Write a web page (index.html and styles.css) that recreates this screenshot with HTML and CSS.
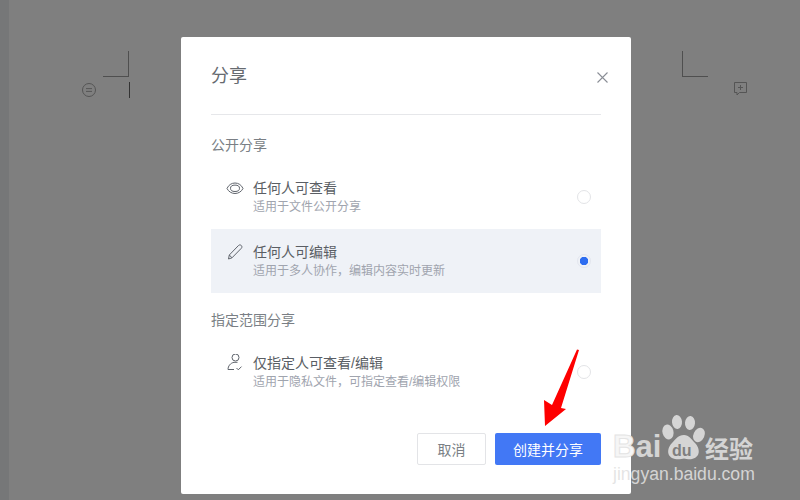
FILE: index.html
```html
<!DOCTYPE html>
<html lang="zh">
<head>
<meta charset="utf-8">
<title>分享</title>
<link rel="stylesheet" href="styles.css">
</head>
<body>
<div class="page">
  <div class="rail"></div>
  <div class="doc">
    <div class="crop crop-left"></div>
    <div class="crop crop-right"></div>
    <div class="caret"></div>
    <svg class="doc-icon minus-icon" viewBox="0 0 16 16"><circle cx="8" cy="8" r="6.500"/><path d="M5 6.600h6M5 9.400h6"/></svg>
    <svg class="doc-icon comment-icon" viewBox="0 0 15 15"><path d="M1.500 1.500h12v10H6.500L4 14v-2.500H1.500z"/><path d="M7.500 4v5M5 6.500h5"/></svg>
  </div>
  <main class="modal">
    <header class="modal-head">
      <h1 class="modal-title">分享</h1>
      <svg class="close" viewBox="0 0 11 11"><path d="M.5.500l10 10M10.500.500l-10 10"/></svg>
    </header>
    <h2 class="section-label">公开分享</h2>
    <section class="option">
      <svg class="option-icon" viewBox="0 0 18 18"><path d="M1 9.500C2.500 6 5.500 4 9 4s6.500 2 8 5.500C15.500 12.500 12.500 14.500 9 14.500S2.500 12.500 1 9.500z"/><ellipse cx="9" cy="9.300" rx="4.500" ry="3.200"/></svg>
      <div class="option-text">
        <div class="option-title">任何人可查看</div>
        <div class="option-desc">适用于文件公开分享</div>
      </div>
      <span class="radio"></span>
    </section>
    <section class="option option-active">
      <svg class="option-icon" viewBox="0 0 18 18"><path d="M2.500 16l.8-4L12.500 2.500c.8-.8 2-.8 2.800 0s.8 2 0 2.800L6 14.800z"/><path d="M3.300 12l2.700 2.800"/></svg>
      <div class="option-text">
        <div class="option-title">任何人可编辑</div>
        <div class="option-desc">适用于多人协作，编辑内容实时更新</div>
      </div>
      <span class="radio radio-on"></span>
    </section>
    <h2 class="section-label section-second">指定范围分享</h2>
    <section class="option">
      <svg class="option-icon" viewBox="0 0 18 18"><circle cx="9.500" cy="3.500" r="3.500"/><path d="M8 15.500H2C2 12 4.500 9 8 8.300h3.500"/><path d="M10.500 14l1.800 1.800 3.200-3.200"/></svg>
      <div class="option-text">
        <div class="option-title">仅指定人可查看/编辑</div>
        <div class="option-desc">适用于隐私文件，可指定查看/编辑权限</div>
      </div>
      <span class="radio"></span>
    </section>
    <footer class="modal-foot">
      <button class="btn btn-plain">取消</button>
      <button class="btn btn-primary">创建并分享</button>
    </footer>
  </main>
  <svg class="arrow" viewBox="0 0 42 85"><path d="M37 4.500L39 5L21 63L26 64L5 81L4 55L12 60z"/></svg>
  <div class="watermark">
    <svg class="paw" viewBox="0 0 48 50">
      <ellipse cx="8" cy="20" rx="5.500" ry="7.500" transform="rotate(-15 8 20)"/>
      <ellipse cx="17" cy="10" rx="5" ry="7" transform="rotate(-5 17 10)"/>
      <ellipse cx="30" cy="11" rx="5" ry="7" transform="rotate(5 30 11)"/>
      <ellipse cx="39" cy="23" rx="5.500" ry="7.500" transform="rotate(25 39 23)"/>
      <path d="M24 23c5 0 7 4 11 8 5 5 6 14-3 16-3 1-6-.5-8-.5s-5 1.500-9 .5c-9-2-8-11-3-16 4-4 6-8 12-8z"/>
    </svg>
    <span class="wm-bai"><span class="wm-b">B</span>ai</span>
    <span class="wm-du">du</span>
    <span class="wm-cn">经验</span>
    <span class="wm-url">jingyan.baidu.com</span>
  </div>
</div>
</body>
</html>
```

FILE: styles.css
```css
* { box-sizing: border-box; }
html, body { margin: 0; padding: 0; }
body {
  width: 800px;
  height: 500px;
  overflow: hidden;
  font-family: "Liberation Sans", "Noto Sans CJK SC", sans-serif;
}
.page {
  position: relative;
  width: 800px;
  height: 500px;
  background: #7f7f7f;
  padding: 37px 169px 6px 181px;
}
.rail {
  position: absolute;
  left: 0;
  top: 0;
  width: 9px;
  height: 500px;
  background: #767778;
}
.crop { position: absolute; width: 26px; height: 26px; border: 0 solid #4f4f4f; }
.crop-left { left: 103px; top: 51px; border-right-width: 1px; border-bottom-width: 1px; }
.crop-right { left: 682px; top: 51px; border-left-width: 1px; border-bottom-width: 1px; }
.caret { position: absolute; left: 129px; top: 82px; width: 1px; height: 16px; background: #333; }
.doc-icon { position: absolute; fill: none; stroke: #555; stroke-width: 1; }
.minus-icon { left: 81px; top: 82px; width: 16px; height: 16px; }
.comment-icon { left: 733px; top: 81px; width: 15px; height: 15px; }

.modal {
  position: relative;
  width: 450px;
  height: 457px;
  background: #fff;
  border-radius: 2px;
  padding: 0 30px;
  display: flex;
  flex-direction: column;
}
.modal-head {
  height: 78px;
  border-bottom: 1px solid #e6e7ea;
  display: flex;
  justify-content: space-between;
  align-items: flex-start;
  padding-top: 26px;
  flex: none;
}
.modal-title {
  margin: 0;
  font-size: 18px;
  line-height: 26px;
  font-weight: 400;
  color: #666a70;
}
.close {
  width: 11px;
  height: 11px;
  margin: 9px -7px 0 0;
  fill: none;
  stroke: #8a8e96;
  stroke-width: 1.100;
}
.section-label {
  margin: 20px 0 0;
  font-size: 14px;
  line-height: 20px;
  font-weight: 400;
  color: #7a7f85;
}
.section-second { margin-top: 17px; }
.option {
  height: 64px;
  flex: none;
  display: flex;
  align-items: flex-start;
  padding: 14px 10px 0 15px;
}
.section-label + .option { margin-top: 10px; }
.option-active { background: #eff2f7; }
.option-icon {
  width: 18px;
  height: 18px;
  flex: none;
  margin-right: 9px;
  fill: none;
  stroke: #5f646c;
  stroke-width: 1;
}
.option-text { flex: 1; }
.option-title {
  font-size: 14px;
  line-height: 19px;
  color: #5a5e64;
}
.option-desc {
  font-size: 12px;
  line-height: 18px;
  color: #a0a4ae;
}
.radio {
  width: 14px;
  height: 14px;
  flex: none;
  margin-top: 11px;
  border-radius: 50%;
  border: 1px solid #e3e4e7;
  background: #fff;
}
.radio-on {
  border-color: #e3e6ee;
  background: radial-gradient(circle, #2d6df0 0 4px, transparent 4.500px);
}
.modal-foot {
  margin-top: auto;
  margin-bottom: 29px;
  display: flex;
  justify-content: flex-end;
  gap: 9px;
}
.btn {
  height: 32px;
  border-radius: 2px;
  font-family: inherit;
  font-size: 14px;
  padding: 0;
}
.btn-plain { width: 69px; background: #fff; border: 1px solid #e3e4e7; color: #7a7f85; }
.btn-primary { width: 106px; background: #4278f5; border: 0; color: #fff; }

.arrow {
  position: absolute;
  left: 540px;
  top: 345px;
  width: 42px;
  height: 85px;
  fill: #fe0000;
}
.watermark {
  position: absolute;
  left: 612px;
  top: 412px;
  width: 160px;
  height: 76px;
  color: rgba(225, 225, 225, .88);
}
.paw { position: absolute; left: 48px; top: 0; width: 48px; height: 50px; fill: rgba(225, 225, 225, .88); }
.wm-bai, .wm-du, .wm-cn, .wm-url { position: absolute; white-space: nowrap; }
.wm-bai { left: 1px; top: 18px; font: 700 31px/34px "Liberation Sans", sans-serif; }
.wm-b { color: #f6f6f6; -webkit-text-stroke: 1px #e4e4e4; }
.wm-du { left: 60px; top: 30px; font: 700 16px/18px "Liberation Sans", sans-serif; color: #7f7f7f; }
.wm-cn { left: 93px; top: 21px; font-size: 24px; line-height: 30px; font-weight: 700; font-family: "Noto Sans CJK SC", sans-serif; }
.wm-url { left: 1px; top: 52px; font: 400 17.600px/20px "Liberation Sans", sans-serif; }
```
